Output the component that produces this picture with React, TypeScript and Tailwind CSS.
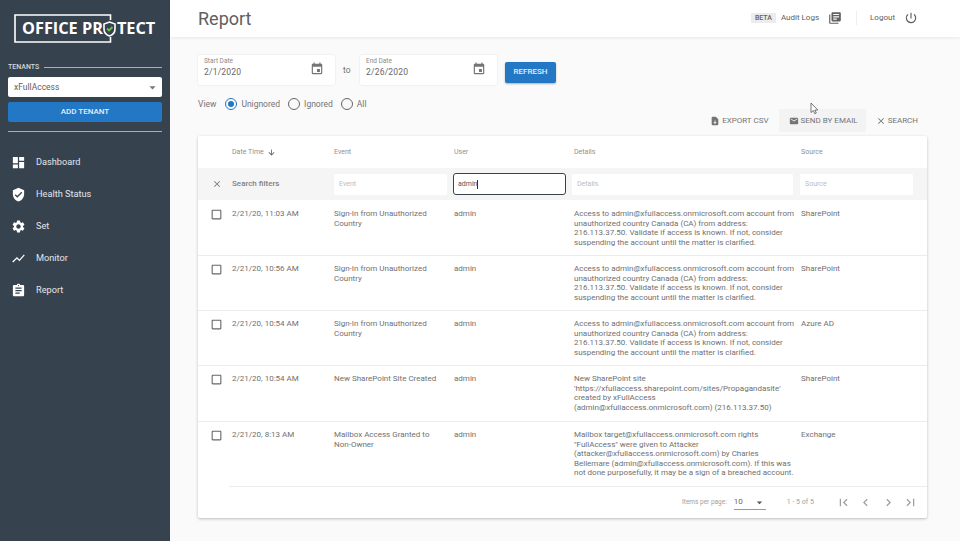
import {
  MdArrowDownward,
  MdArrowDropDown,
  MdAssignment,
  MdCheckBoxOutlineBlank,
  MdChevronLeft,
  MdChevronRight,
  MdClose,
  MdDashboard,
  MdEmail,
  MdEvent,
  MdFirstPage,
  MdLastPage,
  MdLibraryBooks,
  MdPowerSettingsNew,
  MdSettings,
  MdShowChart,
  MdVerifiedUser,
} from "react-icons/md";

const navItems = [
  { label: "Dashboard", icon: MdDashboard },
  { label: "Health Status", icon: MdVerifiedUser },
  { label: "Set", icon: MdSettings },
  { label: "Monitor", icon: MdShowChart },
  { label: "Report", icon: MdAssignment },
];

const accessDetails =
  "Access to admin@xfullaccess.onmicrosoft.com account from unauthorized country Canada (CA) from address: 216.113.37.50. Validate if access is known. If not, consider suspending the account until the matter is clarified.";

const rows = [
  { date: "2/21/20, 11:03 AM", event: "Sign-In from Unauthorized Country", details: accessDetails, source: "SharePoint", height: "h-[56px] pt-[9px] border-b border-[#ececec]" },
  { date: "2/21/20, 10:56 AM", event: "Sign-In from Unauthorized Country", details: accessDetails, source: "SharePoint", height: "h-[55px] pt-[8px] border-b border-[#ececec]" },
  { date: "2/21/20, 10:54 AM", event: "Sign-In from Unauthorized Country", details: accessDetails, source: "Azure AD", height: "h-[55px] pt-[8px] border-b border-[#ececec]" },
  {
    date: "2/21/20, 10:54 AM",
    event: "New SharePoint Site Created",
    details: "New SharePoint site 'https://xfullaccess.sharepoint.com/sites/Propagandasite' created by xFullAccess (admin@xfullaccess.onmicrosoft.com) (216.113.37.50)",
    source: "SharePoint",
    height: "h-[56px] pt-[8px] border-b border-[#ececec]",
  },
  {
    date: "2/21/20, 8:13 AM",
    event: "Mailbox Access Granted to Non-Owner",
    details:
      'Mailbox target@xfullaccess.onmicrosoft.com rights "FullAccess" were given to Attacker (attacker@xfullaccess.onmicrosoft.com) by Charles Bellemare (admin@xfullaccess.onmicrosoft.com). If this was not done purposefully, it may be a sign of a breached account.',
    source: "Exchange",
    height: "h-[64px] pt-[8px]",
  },
];

function Logo() {
  return (
    <div className="relative mx-[14px] mt-[14px] h-[29px] w-[145px]">
      <svg className="absolute left-0 top-0" width="98" height="29" viewBox="0 0 98 29" fill="none" stroke="#fff" strokeWidth="1.6">
        <path d="M96.5 6V1H1V28H96.5V23" />
      </svg>
      <div className="absolute left-[8px] top-[3px] flex h-[23px] items-center font-['Open_Sans',sans-serif] text-[16.3px] font-bold whitespace-nowrap text-white">
        OFFICE PR
        <svg width="13" height="16" viewBox="0 0 13 16" className="mx-[0.5px]">
          <path d="M6.5 1 12 3v5c0 3.500-2.500 6-5.500 7C3.500 14 1 11.500 1 8V3z" fill="none" stroke="#fff" strokeWidth="1.6" />
          <path d="m4 7.500 2 2 3.500-3.500" fill="none" stroke="#6cc24a" strokeWidth="1.8" />
        </svg>
        TECT
      </div>
    </div>
  );
}

function Sidebar() {
  return (
    <aside className="flex h-[541px] w-[170px] shrink-0 flex-col bg-[#37424f] px-2">
      <div className="-mx-2">
        <Logo />
      </div>
      <div className="mt-[19px] flex h-[10px] items-center gap-[5px]">
        <span className="text-[7px] font-medium text-[#d5d8dc]">TENANTS</span>
        <div className="h-px flex-1 bg-[#a9afb6]" />
      </div>
      <div className="mt-[5px] flex h-[20px] items-center justify-between rounded-[2px] bg-white pl-[6px] pr-[2px] text-[8.5px] text-[#5f5f5f]">
        xFullAccess
        <MdArrowDropDown className="text-[15px] text-[#777]" />
      </div>
      <div className="mt-[5px] flex h-[20px] items-center justify-center rounded-[2px] bg-[#2378c5] text-[8px] font-medium text-[#e6eef7]">ADD TENANT</div>
      <div className="mt-[9px] h-px bg-[#a9afb6]" />
      <nav className="mt-[14px] flex flex-col">
        {navItems.map((item) => (
          <div key={item.label} className="flex h-[32px] items-center gap-[10px] pl-[3px] text-[9.2px] text-[#e3e5e8]">
            <item.icon className="text-[15px] text-white" />
            {item.label}
          </div>
        ))}
      </nav>
    </aside>
  );
}

function Header() {
  return (
    <header className="flex h-[37px] items-center justify-between bg-white pb-[1px] pl-[28px] pr-[42px] shadow-[0_1px_3px_rgba(0,0,0,0.08)]">
      <h1 className="text-[18px] font-normal text-[#616161]">Report</h1>
      <div className="flex items-center text-[8px] text-[#616161]">
        <span className="flex h-[10px] w-[25px] items-center justify-center bg-[#ececec] text-[7px] font-medium">BETA</span>
        <span className="ml-[5px]">Audit Logs</span>
        <MdLibraryBooks className="ml-[9px] text-[14px]" />
        <div className="ml-[14px] mr-[13px] h-[14px] w-px bg-[#eeeeee]" />
        <span>Logout</span>
        <MdPowerSettingsNew className="ml-[9px] text-[14px]" />
      </div>
    </header>
  );
}

function DateField({ label, value }: { label: string; value: string }) {
  return (
    <div className="h-[30px] w-[137px] rounded-[2px] bg-white pl-[6px] pr-[11px] shadow-[0_0_2px_rgba(0,0,0,0.12)]">
      <div className="pt-[2px] text-[6.5px] leading-[8px] text-[#8a8a8a]">{label}</div>
      <div className="flex items-center justify-between">
        <span className="mt-[1px] text-[8.5px] leading-[12px] tracking-[0.2px] text-[#666]">{value}</span>
        <MdEvent className="-mt-[5px] text-[14px] text-[#757575]" />
      </div>
    </div>
  );
}

function Radio({ label, checked }: { label: string; checked?: boolean }) {
  return (
    <div className="flex items-center gap-[4px] text-[8.5px] text-[#757575]">
      <span className={`flex h-[12px] w-[12px] items-center justify-center rounded-full border ${checked ? "border-[#2378c5]" : "border-[#666]"}`}>
        {checked && <span className="h-[6px] w-[6px] rounded-full bg-[#2378c5]" />}
      </span>
      {label}
    </div>
  );
}

function FilterInput({ placeholder, width }: { placeholder: string; width: string }) {
  return (
    <div className={`flex h-[21px] ${width} items-center rounded-[2px] bg-white pl-[5px] pt-[1px] text-[7px] text-[#bdbdbd]`}>{placeholder}</div>
  );
}

function ReportTable() {
  return (
    <div className="mt-[4px] w-[729px] rounded-[2px] bg-white text-[8px] leading-[9.6px] text-[#707070] shadow-[0_1px_3px_rgba(0,0,0,0.25)]">
      <div className="flex h-[32px] items-center pt-[1px] text-[7px] text-[#8f8f8f]">
        <div className="flex w-[136px] items-center pl-[34px]">
          Date Time
          <MdArrowDownward className="ml-[3px] text-[9px] text-[#555]" />
        </div>
        <div className="w-[120px]">Event</div>
        <div className="w-[120px]">User</div>
        <div className="w-[227px]">Details</div>
        <div>Source</div>
      </div>
      <div className="flex h-[32px] items-center bg-[#f5f5f5]">
        <MdClose className="ml-[14px] text-[10px] text-[#777]" />
        <span className="ml-[10px] w-[102px] text-[8px] font-medium text-[#808080]">Search filters</span>
        <FilterInput placeholder="Event" width="w-[113px]" />
        <div className="ml-[6px] flex h-[22px] w-[113px] items-center rounded-[3px] border border-[#37424f] bg-white pl-[4px] pt-[1px] text-[7px] text-[#555]">
          admin<span className="h-[9px] w-px bg-[#333]" />
        </div>
        <div className="ml-[6px]">
          <FilterInput placeholder="Details" width="w-[221px]" />
        </div>
        <div className="ml-[7px]">
          <FilterInput placeholder="Source" width="w-[113px]" />
        </div>
      </div>
      {rows.map((row, i) => (
        <div key={i} className={`flex ${row.height} items-start`}>
          <div className="w-[34px] pl-[12px]">
            <MdCheckBoxOutlineBlank className="mt-[-1px] text-[13px] text-[#666]" />
          </div>
          <div className="w-[102px]">{row.date}</div>
          <div className="w-[120px] pr-[16px]">{row.event}</div>
          <div className="w-[120px]">admin</div>
          <div className="w-[227px] pr-[6px]">{row.details}</div>
          <div>{row.source}</div>
        </div>
      ))}
      <div className="ml-[31px] border-t border-[#ececec]" />
      <div className="flex h-[31px] items-center pl-[484px] text-[6.5px] text-[#9e9e9e]">
        <span>Items per page:</span>
        <div className="ml-[7px] flex h-[15px] w-[32px] items-center justify-between border-b border-[#999] text-[8px] text-[#666]">
          10
          <MdArrowDropDown className="text-[13px] text-[#555]" />
        </div>
        <span className="ml-[21px] text-[7px]">1 - 5 of 5</span>
        <div className="ml-[22px] flex gap-[7.5px] text-[15px] text-[#9e9e9e]">
          <MdFirstPage />
          <MdChevronLeft />
          <MdChevronRight />
          <MdLastPage />
        </div>
      </div>
    </div>
  );
}

export default function App() {
  return (
    <div className="flex h-[541px] w-[960px] overflow-hidden bg-[#fafafa] font-['Roboto',sans-serif]">
      <Sidebar />
      <main className="relative min-w-0 flex-1">
        <Header />
        <div className="px-[28px] pt-[18px]">
          <div className="flex items-center">
            <DateField label="Start Date" value="2/1/2020" />
            <span className="ml-[8px] mr-[9px] w-[8px] text-[8.5px] text-[#757575]">to</span>
            <DateField label="End Date" value="2/26/2020" />
            <button className="ml-[8px] mt-[4px] h-[21px] w-[51px] rounded-[2px] bg-[#2378c5] text-[8px] font-medium text-[#e6eef7] shadow-[0_1px_2px_rgba(0,0,0,0.3)]">REFRESH</button>
          </div>
          <div className="mt-[12px] flex h-[14px] items-center text-[8.5px] text-[#757575]">
            View
            <div className="ml-[9px] flex items-center gap-[8px]">
              <Radio label="Unignored" checked />
              <Radio label="Ignored" />
              <Radio label="All" />
            </div>
          </div>
          <div className="-mt-[2px] flex h-[23px] w-[729px] items-center justify-end pr-[9px] text-[8px] text-[#757575]">
            <div className="flex items-center gap-[2px]">
              <svg width="10" height="10" viewBox="0 0 24 24" fill="#757575">
                <path d="M14 2H6a2 2 0 0 0-2 2v16a2 2 0 0 0 2 2h12a2 2 0 0 0 2-2V8zm-2 17-4-4h3v-4h2v4h3z" />
              </svg>
              EXPORT CSV
            </div>
            <div className="ml-[10px] flex h-[23px] items-center gap-[2px] bg-[#f3f3f3] pl-[10px] pr-[8px]">
              <MdEmail className="text-[10px]" />
              SEND BY EMAIL
            </div>
            <div className="ml-[10px] flex items-center gap-[2px]">
              <MdClose className="text-[10px]" />
              SEARCH
            </div>
          </div>
          <ReportTable />
        </div>
        <svg className="absolute left-[640px] top-[102px]" width="9" height="13" viewBox="0 0 9 13">
          <path d="M1 1v9.500l2.300-2 1.500 3.200 1.500-.7-1.500-3h3z" fill="#fff" stroke="#555" strokeWidth="0.8" />
        </svg>
      </main>
    </div>
  );
}
